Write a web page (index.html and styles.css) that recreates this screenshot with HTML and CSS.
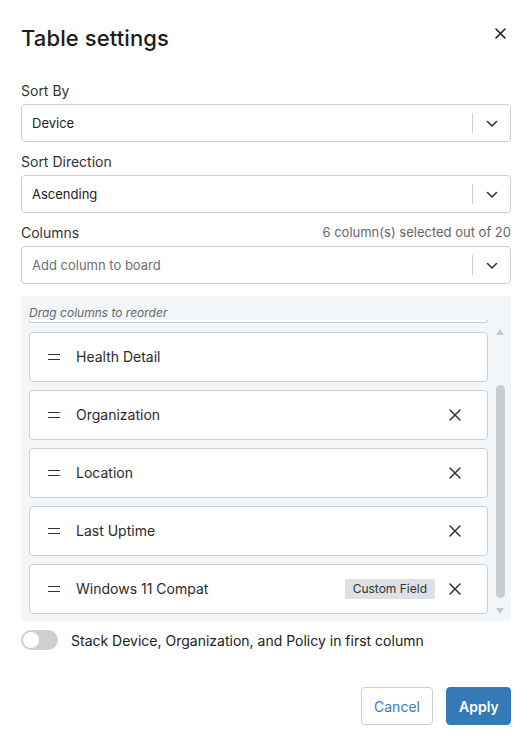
FILE: index.html
```html
<!DOCTYPE html>
<html lang="en">
<head>
<meta charset="utf-8">
<title>Table settings</title>
<link rel="stylesheet" href="styles.css">
</head>
<body>
<div class="panel">
  <div class="header">
    <h1 class="title">Table settings</h1>
    <button class="close" aria-label="Close">
      <svg width="11" height="11" viewBox="0 0 11 11"><path d="M1 1L10 10M10 1L1 10" stroke="#222" stroke-width="1.6" stroke-linecap="round"/></svg>
    </button>
  </div>

  <div class="field first">
    <div class="label-row"><span class="label">Sort By</span></div>
    <div class="select">
      <span class="value">Device</span>
      <span class="divider"></span>
      <span class="chev"><svg width="12" height="8" viewBox="0 0 12 8"><path d="M1.5 1.5L6 6L10.5 1.5" fill="none" stroke="#333" stroke-width="1.6" stroke-linecap="round" stroke-linejoin="round"/></svg></span>
    </div>
  </div>

  <div class="field">
    <div class="label-row"><span class="label">Sort Direction</span></div>
    <div class="select">
      <span class="value">Ascending</span>
      <span class="divider"></span>
      <span class="chev"><svg width="12" height="8" viewBox="0 0 12 8"><path d="M1.5 1.5L6 6L10.5 1.5" fill="none" stroke="#333" stroke-width="1.6" stroke-linecap="round" stroke-linejoin="round"/></svg></span>
    </div>
  </div>

  <div class="field">
    <div class="label-row"><span class="label">Columns</span><span class="count">6 column(s) selected out of 20</span></div>
    <div class="select">
      <span class="value placeholder">Add column to board</span>
      <span class="divider"></span>
      <span class="chev"><svg width="12" height="8" viewBox="0 0 12 8"><path d="M1.5 1.5L6 6L10.5 1.5" fill="none" stroke="#333" stroke-width="1.6" stroke-linecap="round" stroke-linejoin="round"/></svg></span>
    </div>
  </div>

  <div class="reorder">
    <div class="reorder-list">
      <div class="hint">Drag columns to reorder</div>
      <div class="card-tail"></div>
      <div class="card">
        <span class="handle"></span>
        <span class="name">Health Detail</span>
      </div>
      <div class="card">
        <span class="handle"></span>
        <span class="name">Organization</span>
        <span class="remove"><svg width="12" height="12" viewBox="0 0 12 12"><path d="M1 1L11 11M11 1L1 11" stroke="#333" stroke-width="1.5" stroke-linecap="round"/></svg></span>
      </div>
      <div class="card">
        <span class="handle"></span>
        <span class="name">Location</span>
        <span class="remove"><svg width="12" height="12" viewBox="0 0 12 12"><path d="M1 1L11 11M11 1L1 11" stroke="#333" stroke-width="1.5" stroke-linecap="round"/></svg></span>
      </div>
      <div class="card">
        <span class="handle"></span>
        <span class="name">Last Uptime</span>
        <span class="remove"><svg width="12" height="12" viewBox="0 0 12 12"><path d="M1 1L11 11M11 1L1 11" stroke="#333" stroke-width="1.5" stroke-linecap="round"/></svg></span>
      </div>
      <div class="card">
        <span class="handle"></span>
        <span class="name">Windows 11 Compat</span>
        <span class="badge">Custom Field</span>
        <span class="remove"><svg width="12" height="12" viewBox="0 0 12 12"><path d="M1 1L11 11M11 1L1 11" stroke="#333" stroke-width="1.5" stroke-linecap="round"/></svg></span>
      </div>
      <div class="card-peek"></div>
    </div>
    <div class="scrollbar">
      <span class="arrow up"></span>
      <span class="thumb"></span>
      <span class="arrow down"></span>
    </div>
  </div>

  <div class="toggle-row">
    <span class="toggle"><span class="knob"></span></span>
    <span class="toggle-label">Stack Device, Organization, and Policy in first column</span>
  </div>

  <div class="actions">
    <button class="btn btn-cancel">Cancel</button>
    <button class="btn btn-apply">Apply</button>
  </div>
</div>
</body>
</html>
```

FILE: styles.css
```css
* { box-sizing: border-box; }

html, body {
  margin: 0;
  padding: 0;
  background: #ffffff;
}

body {
  font-family: Inter, "Noto Sans", "Liberation Sans", sans-serif;
  color: #222;
}

.panel {
  width: 530px;
  padding: 24px 19px 0 21px;
}

.header {
  display: flex;
  justify-content: space-between;
  align-items: flex-start;
  height: 28px;
}

.title {
  margin: 0;
  font-size: 22px;
  line-height: 28px;
  font-weight: 500;
  letter-spacing: 0.1px;
  color: #1b1b1b;
}

.close {
  border: 0;
  background: none;
  padding: 0;
  margin: 3px 5px 0 0;
  width: 12px;
  height: 12px;
  display: flex;
  align-items: center;
  justify-content: center;
}

.field {
  margin-top: 9px;
}

.field.first {
  margin-top: 28px;
}

.label-row {
  display: flex;
  justify-content: space-between;
  align-items: center;
  height: 20px;
  margin-bottom: 4px;
}

.label {
  font-size: 14px;
  color: #333;
}

.count {
  font-size: 13px;
  color: #666;
}

.select {
  height: 38px;
  border: 1px solid #cbcfd4;
  border-radius: 4px;
  display: flex;
  align-items: center;
  padding-left: 10px;
  background: #fff;
}

.value {
  flex: 1;
  font-size: 13px;
  color: #222;
}

.value.placeholder {
  color: #6b6f75;
}

.divider {
  width: 1px;
  height: 20px;
  background: #cbcfd4;
}

.chev {
  width: 37px;
  display: flex;
  align-items: center;
  justify-content: center;
  padding-top: 1px;
}

.reorder {
  margin-top: 12px;
  height: 325px;
  background: #f3f6f9;
  border-radius: 4px;
  display: flex;
  overflow: hidden;
}

.reorder-list {
  flex: 1;
  padding: 9px 0 0 8px;
  display: flex;
  flex-direction: column;
  overflow: hidden;
}

.hint {
  font-size: 12px;
  line-height: 15px;
  font-style: italic;
  color: #666;
  flex: none;
}

.card-tail {
  flex: none;
  height: 3px;
  border: 1px solid #cbcfd4;
  border-top: 0;
  border-radius: 0 0 4px 4px;
  background: #fff;
  margin-bottom: 9px;
}

.card {
  flex: none;
  height: 50px;
  margin-bottom: 8px;
  background: #fff;
  border: 1px solid #cbcfd4;
  border-radius: 4px;
  display: flex;
  align-items: center;
  padding-left: 18px;
  padding-right: 26px;
  padding-bottom: 1px;
}

.handle {
  width: 12px;
  height: 6px;
  border-top: 1.6px solid #333;
  border-bottom: 1.6px solid #333;
  margin-right: 16px;
  flex: none;
}

.name {
  flex: 1;
  font-size: 14px;
  color: #2b2b2b;
}

.badge {
  font-size: 12px;
  line-height: 20px;
  height: 20px;
  padding: 0 8px;
  background: #dde1e5;
  color: #333;
  border-radius: 2px;
  margin-right: 14px;
}

.remove {
  width: 12px;
  height: 12px;
  display: flex;
}

.card-peek {
  flex: none;
  height: 8px;
  background: linear-gradient(#ffffff, #fafbfc);
}

.scrollbar {
  width: 23px;
  flex: none;
  display: flex;
  flex-direction: column;
  align-items: center;
  padding-top: 33px;
  padding-left: 1px;
}

.arrow {
  width: 0;
  height: 0;
  border-left: 4.5px solid transparent;
  border-right: 4.5px solid transparent;
}

.arrow.up {
  border-bottom: 6px solid #c4c8ce;
}

.arrow.down {
  border-top: 6px solid #c4c8ce;
  margin-top: 10px;
}

.thumb {
  width: 9px;
  height: 213px;
  margin-top: 50px;
  background: #c8ccd2;
  border-radius: 5px;
}

.toggle-row {
  display: flex;
  align-items: center;
  margin-top: 9px;
  height: 20px;
}

.toggle {
  width: 37px;
  height: 20px;
  border-radius: 10px;
  background: #ccd0d5;
  padding: 2px;
  display: flex;
  margin-right: 13px;
}

.knob {
  width: 16px;
  height: 16px;
  border-radius: 50%;
  background: #fff;
}

.toggle-label {
  font-size: 14px;
  color: #222;
  padding-top: 1px;
}

.actions {
  margin-top: 37px;
  display: flex;
  justify-content: flex-end;
  gap: 13px;
}

.btn {
  height: 38px;
  border-radius: 4px;
  font-family: inherit;
  font-size: 14px;
  padding: 0 12px;
  cursor: pointer;
}

.btn-cancel {
  width: 72px;
  background: #fff;
  border: 1px solid #cbcfd4;
  color: #3a7bbf;
}

.btn-apply {
  width: 65px;
  background: #357ab8;
  border: 1px solid #357ab8;
  color: #fff;
  font-weight: 600;
}
```
